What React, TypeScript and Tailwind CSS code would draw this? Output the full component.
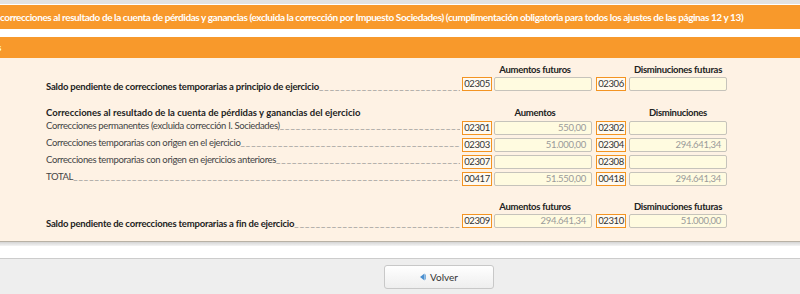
import React from 'react';

type Row = {
  label: string;
  bold?: boolean;
  c1: string;
  v1: string;
  c2: string;
  v2: string;
};

const FONT = "font-['Lato','Liberation_Sans',sans-serif]";

const Leader: React.FC = () => (
  <span className="flex-1 overflow-hidden whitespace-nowrap text-[#8f8f8f] font-normal tracking-[1px] -translate-y-[1px]">
    {'_'.repeat(120)}
  </span>
);

const CodeBox: React.FC<{ code: string }> = ({ code }) => (
  <div className="w-[30px] h-[14px] border border-[#f39422] bg-[#fffaf1] text-[9.5px] tracking-[-0.4px] leading-[12px] text-[#333] text-center">
    {code}
  </div>
);

const ValueBox: React.FC<{ value: string }> = ({ value }) => (
  <div className="w-[98px] h-[14px] border border-[#c6c3bb] rounded-[2px] bg-[#fffbe0] text-[9.5px] tracking-[-0.3px] leading-[12px] text-[#9a9a9a] text-right pr-[5px]">
    {value}
  </div>
);

const DataRow: React.FC<{ row: Row }> = ({ row }) => (
  <div className="flex items-start pl-[46px] h-[14px]">
    <div
      className={
        'w-[414px] flex text-[9.5px] leading-[14px] whitespace-nowrap ' +
        (row.bold ? 'font-bold text-[#222] tracking-[-0.2px] mt-[3px]' : 'text-[#444] tracking-[-0.35px] -mt-[2px]')
      }
    >
      <span>{row.label}</span>
      <Leader />
    </div>
    <div className="ml-[2px]">
      <CodeBox code={row.c1} />
    </div>
    <div className="ml-[2px]">
      <ValueBox value={row.v1} />
    </div>
    <div className="ml-[4px]">
      <CodeBox code={row.c2} />
    </div>
    <div className="ml-[3px]">
      <ValueBox value={row.v2} />
    </div>
  </div>
);

const HeaderRow: React.FC<{ left?: string; h1: string; h2: string }> = ({ left, h1, h2 }) => (
  <div className="flex pl-[46px] h-[14px] text-[9.5px] tracking-[-0.3px] leading-[14px] font-bold text-[#222] whitespace-nowrap">
    <div className="w-[416px] tracking-normal">{left}</div>
    <div className="w-[146px] text-center">{h1}</div>
    <div className="w-[21px]" />
    <div className="w-[98px] text-center">{h2}</div>
  </div>
);

const correcciones: Row[] = [
  { label: 'Correcciones permanentes (excluida corrección I. Sociedades)', c1: '02301', v1: '550,00', c2: '02302', v2: '' },
  { label: 'Correcciones temporarias con origen en el ejercicio', c1: '02303', v1: '51.000,00', c2: '02304', v2: '294.641,34' },
  { label: 'Correcciones temporarias con origen en ejercicios anteriores', c1: '02307', v1: '', c2: '02308', v2: '' },
  { label: 'TOTAL', c1: '00417', v1: '51.550,00', c2: '00418', v2: '294.641,34' },
];

export default function App() {
  return (
    <div className={`w-[800px] h-[294px] overflow-hidden bg-[#eeeeee] ${FONT}`}>
      <div className="h-[4px] bg-[#e2e2e2]" />
      <div className="h-[1px] bg-white" />
      <div className="h-[24px] bg-[#f8992b] flex items-center whitespace-nowrap overflow-hidden text-white font-bold text-[10px] tracking-[-0.42px]">
        <span>
          correcciones al resultado de la cuenta de pérdidas y ganancias (excluida la corrección por Impuesto Sociedades) (cumplimentación obligatoria para todos los ajustes de las páginas 12 y 13)
        </span>
      </div>
      <div className="h-[8px] bg-white" />
      <div className="h-[21px] bg-[#f8992b] flex items-center overflow-hidden text-white font-bold text-[10px]">
        <span className="-ml-[3px]">s</span>
      </div>

      <div className="h-[183px] bg-[#fef2e4] pt-[5px]">
        <HeaderRow h1="Aumentos futuros" h2="Disminuciones futuras" />
        <DataRow
          row={{ label: 'Saldo pendiente de correcciones temporarias a principio de ejercicio', bold: true, c1: '02305', v1: '', c2: '02306', v2: '' }}
        />

        <div className="mt-[15px]">
          <HeaderRow left="Correcciones al resultado de la cuenta de pérdidas y ganancias del ejercicio" h1="Aumentos" h2="Disminuciones" />
        </div>
        <div className="mt-[1px] flex flex-col gap-[3px]">
          {correcciones.map(r => (
            <DataRow key={r.c1} row={r} />
          ))}
        </div>

        <div className="mt-[14px]">
          <HeaderRow h1="Aumentos futuros" h2="Disminuciones futuras" />
        </div>
        <DataRow
          row={{ label: 'Saldo pendiente de correcciones temporarias a fin de ejercicio', bold: true, c1: '02309', v1: '294.641,34', c2: '02310', v2: '51.000,00' }}
        />
      </div>
      <div className="h-[1px] bg-[#b8b1a5]" />
      <div className="h-[4px] bg-gradient-to-b from-[#d4d4d4] to-[#f4f4f4]" />
      <div className="h-[12px] bg-white" />
      <div className="h-[1px] bg-[#cccccc]" />

      <div className="h-[35px] pt-[6px] pl-[384px] flex">
        <button className="w-[110px] h-[24px] border border-[#c8c8c8] rounded-[3px] bg-gradient-to-b from-[#ffffff] to-[#eeeeee] flex items-center justify-center gap-[4px] text-[10px] text-[#333]">
          <svg width="6" height="8" viewBox="0 0 6 8">
            <path d="M0 4 L4.5 0.5 L4.5 7.5 Z" fill="#4a8fd0" />
            <rect x="4.8" y="1.5" width="1.2" height="5" fill="#7fb0dd" />
          </svg>
          <span>Volver</span>
        </button>
      </div>
    </div>
  );
}
